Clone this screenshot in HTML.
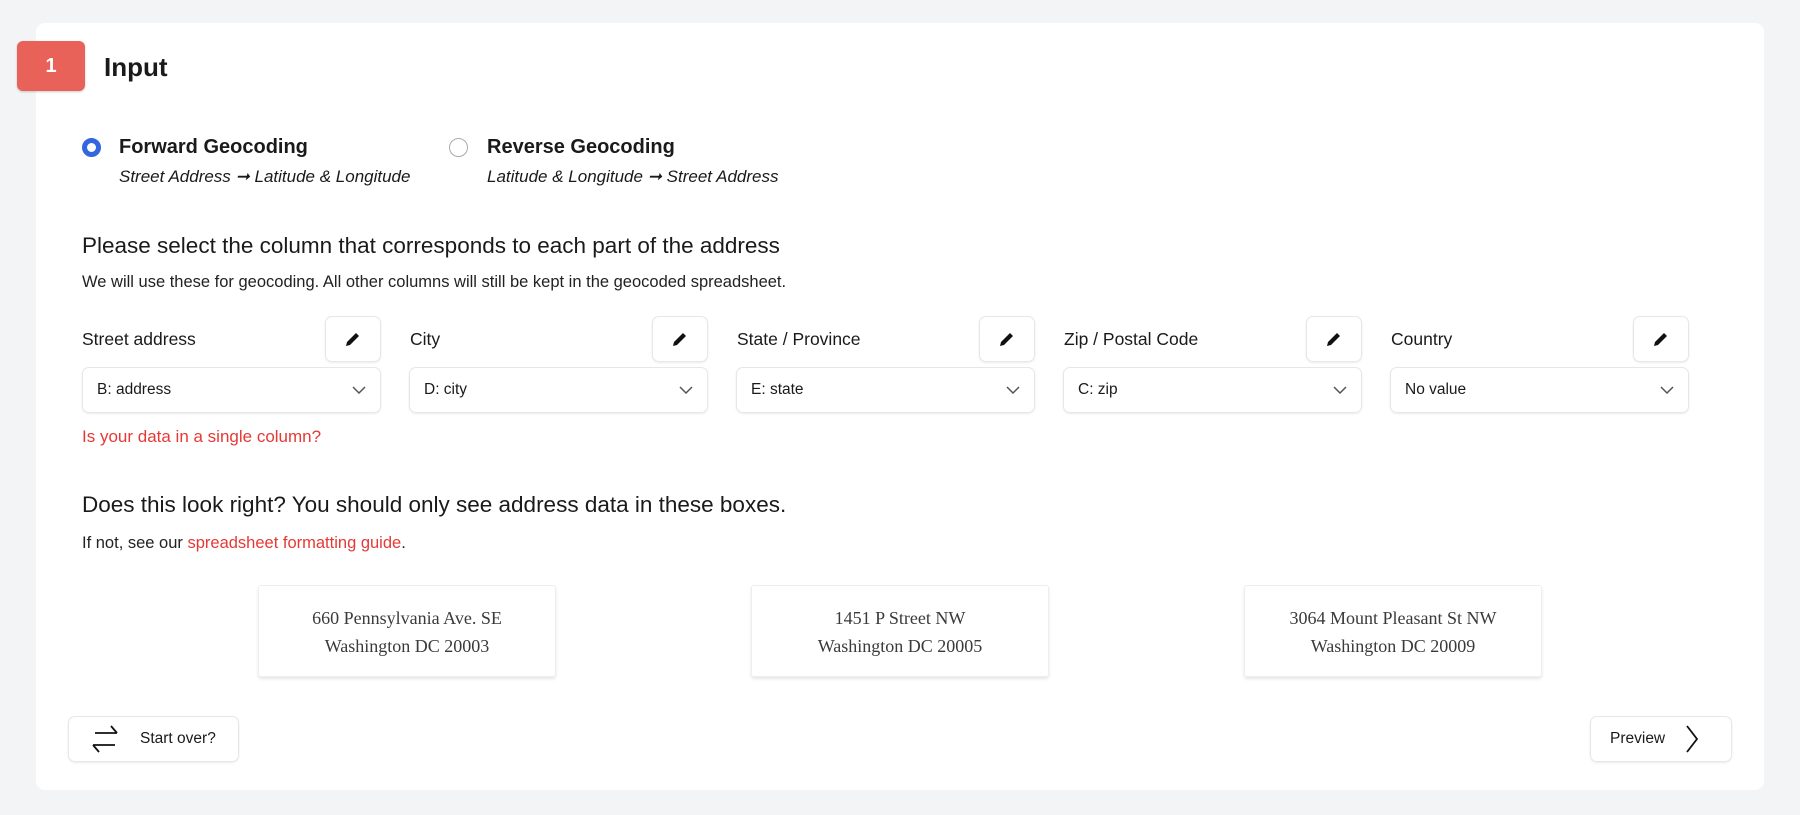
<!DOCTYPE html>
<html><head><meta charset="utf-8"><style>
*{box-sizing:border-box;margin:0;padding:0}
body{width:1800px;height:815px;background:#f3f4f6;font-family:"Liberation Sans",sans-serif;color:#1a1a1a;position:relative;overflow:hidden}
.card{position:absolute;left:36px;top:23px;width:1728px;height:767px;background:#fff;border-radius:9px}
.abs{position:absolute;white-space:nowrap}
.badge{left:17px;top:41px;width:68px;height:50px;background:#e8625a;border-radius:6px;color:#fff;font-weight:bold;font-size:20px;display:flex;align-items:center;justify-content:center;box-shadow:0 1px 2px rgba(0,0,0,.2)}
.radio{width:19px;height:19px;border-radius:50%;border:1.5px solid #aaa}
.radio.on{border:5px solid #3366e0}
.t{font-size:20px;font-weight:bold}
.sub{font-size:17px;font-style:italic}
.h{font-size:22.5px}
.p{font-size:16.5px;color:#222}
.lbl{font-size:17.5px}
.edit{width:56px;height:46px;border:1px solid #e5e7eb;border-radius:7px;box-shadow:0 1px 2px rgba(0,0,0,.08);display:flex;align-items:center;justify-content:center}
.sel{width:299px;height:46px;border:1px solid #e5e7eb;border-radius:7px;box-shadow:0 1px 2px rgba(0,0,0,.08);font-size:15.5px;padding:0 14px;display:flex;align-items:center;justify-content:space-between}
.red{color:#e53935}
.box{width:298px;height:92px;border:1px solid #eee;border-radius:3px;box-shadow:0 2px 3px rgba(0,0,0,.1);font-family:"Liberation Serif",serif;font-size:18px;color:#3a3a3a;text-align:center;line-height:28px;padding-top:18px}
.btn{height:46px;border:1px solid #e5e7eb;border-radius:7px;box-shadow:0 1px 2px rgba(0,0,0,.08);font-size:15.5px;display:flex;align-items:center}
</style></head><body>
<div class="card"></div>
<div class="abs badge">1</div>
<div class="abs" style="left:104px;top:52px;font-size:26px;font-weight:bold">Input</div>

<div class="abs radio on" style="left:82px;top:138px"></div>
<div class="abs t" style="left:119px;top:136px">Forward Geocoding</div>
<div class="abs sub" style="left:119px;top:167px">Street Address ➞ Latitude &amp; Longitude</div>
<div class="abs radio" style="left:449px;top:138px"></div>
<div class="abs t" style="left:487px;top:136px">Reverse Geocoding</div>
<div class="abs sub" style="left:487px;top:167px">Latitude &amp; Longitude ➞ Street Address</div>

<div class="abs h" style="left:82px;top:233px">Please select the column that corresponds to each part of the address</div>
<div class="abs p" style="left:82px;top:273px">We will use these for geocoding. All other columns will still be kept in the geocoded spreadsheet.</div>

<div class="abs lbl" style="left:82px;top:329px">Street address</div>
<div class="abs lbl" style="left:410px;top:329px">City</div>
<div class="abs lbl" style="left:737px;top:329px">State / Province</div>
<div class="abs lbl" style="left:1064px;top:329px">Zip / Postal Code</div>
<div class="abs lbl" style="left:1391px;top:329px">Country</div>

<div class="abs edit" style="left:325px;top:316px"><svg width="20" height="20" viewBox="0 0 20 20"><path d="M3 17l1-4 9-9 3 3-9 9z" fill="#111"/></svg></div>
<div class="abs edit" style="left:652px;top:316px"><svg width="20" height="20" viewBox="0 0 20 20"><path d="M3 17l1-4 9-9 3 3-9 9z" fill="#111"/></svg></div>
<div class="abs edit" style="left:979px;top:316px"><svg width="20" height="20" viewBox="0 0 20 20"><path d="M3 17l1-4 9-9 3 3-9 9z" fill="#111"/></svg></div>
<div class="abs edit" style="left:1306px;top:316px"><svg width="20" height="20" viewBox="0 0 20 20"><path d="M3 17l1-4 9-9 3 3-9 9z" fill="#111"/></svg></div>
<div class="abs edit" style="left:1633px;top:316px"><svg width="20" height="20" viewBox="0 0 20 20"><path d="M3 17l1-4 9-9 3 3-9 9z" fill="#111"/></svg></div>

<div class="abs sel" style="left:82px;top:367px"><span>B: address</span><svg width="14" height="8" viewBox="0 0 14 8"><path d="M1 1l6 6 6-6" fill="none" stroke="#555" stroke-width="1.5"/></svg></div>
<div class="abs sel" style="left:409px;top:367px"><span>D: city</span><svg width="14" height="8" viewBox="0 0 14 8"><path d="M1 1l6 6 6-6" fill="none" stroke="#555" stroke-width="1.5"/></svg></div>
<div class="abs sel" style="left:736px;top:367px"><span>E: state</span><svg width="14" height="8" viewBox="0 0 14 8"><path d="M1 1l6 6 6-6" fill="none" stroke="#555" stroke-width="1.5"/></svg></div>
<div class="abs sel" style="left:1063px;top:367px"><span>C: zip</span><svg width="14" height="8" viewBox="0 0 14 8"><path d="M1 1l6 6 6-6" fill="none" stroke="#555" stroke-width="1.5"/></svg></div>
<div class="abs sel" style="left:1390px;top:367px"><span>No value</span><svg width="14" height="8" viewBox="0 0 14 8"><path d="M1 1l6 6 6-6" fill="none" stroke="#555" stroke-width="1.5"/></svg></div>

<div class="abs red" style="left:82px;top:427px;font-size:17px">Is your data in a single column?</div>

<div class="abs h" style="left:82px;top:492px">Does this look right? You should only see address data in these boxes.</div>
<div class="abs p" style="left:82px;top:534px">If not, see our <span class="red">spreadsheet formatting guide</span>.</div>

<div class="abs box" style="left:258px;top:585px">660 Pennsylvania Ave. SE<br>Washington DC 20003</div>
<div class="abs box" style="left:751px;top:585px">1451 P Street NW<br>Washington DC 20005</div>
<div class="abs box" style="left:1244px;top:585px">3064 Mount Pleasant St NW<br>Washington DC 20009</div>

<div class="abs btn" style="left:68px;top:716px;width:171px"><svg style="margin-left:20px" width="32" height="34" viewBox="0 0 32 34"><path d="M6 11h22M22 4l6 7M26 23H4M4 23l6 7" fill="none" stroke="#111" stroke-width="1.8"/></svg><span style="margin-left:19px">Start over?</span></div>
<div class="abs btn" style="left:1590px;top:716px;width:142px"><span style="margin-left:19px">Preview</span><svg style="margin-left:20px" width="14" height="30" viewBox="0 0 14 30"><path d="M2 2l10 13-10 13" fill="none" stroke="#111" stroke-width="1.8"/></svg></div>
</body></html>
